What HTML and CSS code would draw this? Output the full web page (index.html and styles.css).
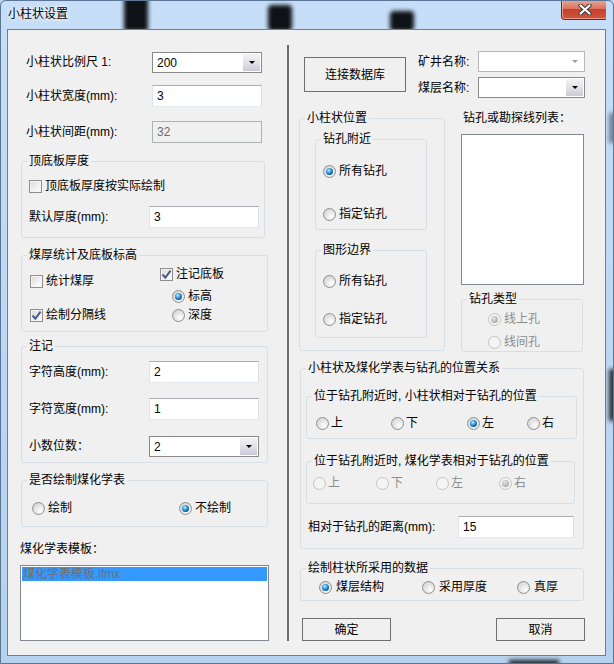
FILE: index.html
```html
<!DOCTYPE html>
<html lang="zh-CN">
<head>
    <meta charset="UTF-8">
    <title>小柱状设置</title>
    <link rel="stylesheet" href="styles.css">
</head>
<body>
<div class="window">
    <span class="glass g-edge1"></span>
    <span class="glass g-edge2"></span>
    <span class="glass g-bottom"></span>

    <div class="titlebar">
        <span class="glass g1"></span>
        <span class="glass g2"></span>
        <span class="glass g3"></span>
        <span class="title">小柱状设置</span>
        <div class="close-btn">
            <svg width="14" height="11" viewBox="0 0 14 11">
                <path d="M2.5 1.5 L11.5 9.5 M11.5 1.5 L2.5 9.5" stroke="#3b3b3b" stroke-width="4.2" stroke-linecap="round"/>
                <path d="M2.5 1.5 L11.5 9.5 M11.5 1.5 L2.5 9.5" stroke="#ffffff" stroke-width="2.2" stroke-linecap="round"/>
            </svg>
        </div>
    </div>

    <div class="client">
        <!-- left column -->
        <div class="left-col">
            <div class="top-row row-scale">
                <span class="lbl-126">小柱状比例尺 1:</span>
                <div class="combo w110"><span class="combo-text">200</span><span class="drop"><i class="arrow"></i></span></div>
            </div>
            <div class="top-row row-width">
                <span class="lbl-126">小柱状宽度(mm):</span>
                <div class="edit w110">3</div>
            </div>
            <div class="top-row row-gap">
                <span class="lbl-126">小柱状间距(mm):</span>
                <div class="edit w110 disabled">32</div>
            </div>

            <fieldset class="group fs-thick">
                <legend>顶底板厚度</legend>
                <div class="opt ml2"><span class="check"></span>顶底板厚度按实际绘制</div>
                <div class="field-row ml2 mt12">
                    <span class="lbl-120">默认厚度(mm):</span>
                    <div class="edit w110">3</div>
                </div>
            </fieldset>

            <fieldset class="group fs-stat">
                <legend>煤厚统计及底板标高</legend>
                <div class="stat-body">
                    <div class="stat-left">
                        <div class="opt st-l1"><span class="check"></span>统计煤厚</div>
                        <div class="opt st-l2"><span class="check on"><svg width="11" height="11" viewBox="0 0 11 11"><path d="M1.5 5.5 L4.3 8.6 L9.6 1.6" fill="none" stroke="#4a5c8e" stroke-width="2"/></svg></span>绘制分隔线</div>
                    </div>
                    <div class="stat-right">
                        <div class="opt st-r1"><span class="check on"><svg width="11" height="11" viewBox="0 0 11 11"><path d="M1.5 5.5 L4.3 8.6 L9.6 1.6" fill="none" stroke="#4a5c8e" stroke-width="2"/></svg></span>注记底板</div>
                        <div class="opt st-r2"><span class="radio on"></span>标高</div>
                        <div class="opt st-r3"><span class="radio"></span>深度</div>
                    </div>
                </div>
            </fieldset>

            <fieldset class="group fs-note">
                <legend>注记</legend>
                <div class="field-row ml2">
                    <span class="lbl-120">字符高度(mm):</span>
                    <div class="edit w110">2</div>
                </div>
                <div class="field-row ml2 mt15">
                    <span class="lbl-120">字符宽度(mm):</span>
                    <div class="edit w110">1</div>
                </div>
                <div class="field-row ml2 mt15">
                    <span class="lbl-120">小数位数：</span>
                    <div class="combo w110"><span class="combo-text">2</span><span class="drop"><i class="arrow"></i></span></div>
                </div>
            </fieldset>

            <fieldset class="group fs-chem">
                <legend>是否绘制煤化学表</legend>
                <div class="radio-row chem-row">
                    <div class="opt"><span class="radio"></span>绘制</div>
                    <div class="opt"><span class="radio on"></span>不绘制</div>
                </div>
            </fieldset>

            <div class="plain-lbl tpl-lbl">煤化学表模板：</div>
            <div class="listbox tpl-list">
                <div class="list-item selected">煤化学表模板.lfmx</div>
            </div>
        </div>

        <div class="divider"></div>

        <!-- right column -->
        <div class="right-col">
            <div class="db-section">
                <div class="btn btn-db">连接数据库</div>
                <div class="db-fields">
                    <div class="field-row h21">
                        <span class="lbl-60">矿井名称:</span>
                        <div class="combo w107 disabled"><span class="combo-text"></span><span class="drop"><i class="arrow"></i></span></div>
                    </div>
                    <div class="field-row h21 mt5">
                        <span class="lbl-60">煤层名称:</span>
                        <div class="combo w107"><span class="combo-text"></span><span class="drop"><i class="arrow"></i></span></div>
                    </div>
                </div>
            </div>

            <div class="mid-section">
                <fieldset class="group fs-pos">
                    <legend>小柱状位置</legend>
                    <fieldset class="group fs-near">
                        <legend>钻孔附近</legend>
                        <div class="opt near-1"><span class="radio on"></span>所有钻孔</div>
                        <div class="opt near-2"><span class="radio"></span>指定钻孔</div>
                    </fieldset>
                    <fieldset class="group fs-bound">
                        <legend>图形边界</legend>
                        <div class="opt bound-1"><span class="radio"></span>所有钻孔</div>
                        <div class="opt bound-2"><span class="radio"></span>指定钻孔</div>
                    </fieldset>
                </fieldset>

                <div class="hole-col">
                    <div class="plain-lbl hole-lbl">钻孔或勘探线列表：</div>
                    <div class="listbox hole-list"></div>
                    <fieldset class="group fs-type">
                        <legend>钻孔类型</legend>
                        <div class="opt dim type-1"><span class="radio on disabled"></span>线上孔</div>
                        <div class="opt dim type-2"><span class="radio disabled"></span>线间孔</div>
                    </fieldset>
                </div>
            </div>

            <fieldset class="group fs-rel">
                <legend>小柱状及煤化学表与钻孔的位置关系</legend>
                <fieldset class="group fs-rel-a">
                    <legend>位于钻孔附近时, 小柱状相对于钻孔的位置</legend>
                    <div class="radio-row rel-a-row">
                        <div class="opt"><span class="radio"></span>上</div>
                        <div class="opt"><span class="radio"></span>下</div>
                        <div class="opt"><span class="radio on"></span>左</div>
                        <div class="opt"><span class="radio"></span>右</div>
                    </div>
                </fieldset>
                <fieldset class="group fs-rel-b">
                    <legend>位于钻孔附近时, 煤化学表相对于钻孔的位置</legend>
                    <div class="radio-row rel-b-row dim">
                        <div class="opt"><span class="radio disabled"></span>上</div>
                        <div class="opt"><span class="radio disabled"></span>下</div>
                        <div class="opt"><span class="radio disabled"></span>左</div>
                        <div class="opt"><span class="radio on disabled"></span>右</div>
                    </div>
                </fieldset>
                <div class="field-row dist-row">
                    <span class="lbl-150">相对于钻孔的距离(mm):</span>
                    <div class="edit w116">15</div>
                </div>
            </fieldset>

            <fieldset class="group fs-data">
                <legend>绘制柱状所采用的数据</legend>
                <div class="radio-row data-row">
                    <div class="opt"><span class="radio on"></span>煤层结构</div>
                    <div class="opt"><span class="radio"></span>采用厚度</div>
                    <div class="opt"><span class="radio"></span>真厚</div>
                </div>
            </fieldset>

            <div class="btn-row">
                <div class="btn btn-ok">确定</div>
                <div class="btn btn-cancel">取消</div>
            </div>
        </div>
    </div>
</div>
</body>
</html>
```

FILE: styles.css
```css
* {
    box-sizing: border-box;
}

body {
    margin: 0;
    font-family: "Liberation Sans", "Noto Sans CJK SC", sans-serif;
    font-size: 12px;
    line-height: 14px;
    color: #000;
    background: #b9d3ee;
}

.window {
    position: relative;
    width: 614px;
    height: 664px;
    padding: 0 7px 7px 6px;
    background: linear-gradient(#c6def7, #bcd6f1 60%, #b6d1ee);
    border: 1px solid #5d7594;
    border-radius: 6px 6px 0 0;
    overflow: hidden;
}

/* desktop showing through the glass frame */
.glass {
    position: absolute;
    background: #0e1216;
    filter: blur(2px);
}

.g1 { left: 117px; top: -4px; width: 24px; height: 34px; }
.g2 { left: 261px; top: 4px; width: 24px; height: 26px; border-radius: 4px; }
.g3 { left: 383px; top: 10px; width: 24px; height: 20px; border-radius: 4px; }
.g-edge1 { right: -3px; top: 112px; width: 7px; height: 30px; background: #6f8092; }
.g-edge2 { right: -3px; top: 368px; width: 7px; height: 52px; background: #2a3038; }
.g-bottom { left: 508px; bottom: -3px; width: 50px; height: 6px; background: #20262c; }

.titlebar {
    position: relative;
    height: 28px;
    display: flex;
    align-items: center;
    overflow: hidden;
}

.title {
    position: relative;
    margin-top: -2px;
    padding-left: 1px;
    text-shadow: 0 0 6px #fff, 0 0 3px #fff;
}

.close-btn {
    position: relative;
    margin-left: auto;
    margin-right: -2px;
    align-self: flex-start;
    margin-top: -1px;
    width: 47px;
    height: 20px;
    display: flex;
    align-items: center;
    justify-content: center;
    background: linear-gradient(#e9a89b, #dc735f 45%, #c7412b 50%, #d0563f);
    border: 1px solid #6f2a1f;
    border-top: none;
    border-radius: 0 0 4px 4px;
    box-shadow: inset 0 0 0 1px rgba(255, 220, 210, 0.5);
}

.client {
    position: relative;
    z-index: 1;
    height: 627px;
    display: flex;
    align-items: flex-start;
    background: #f0f0f0;
    border: 1px solid #6f7e8e;
}

/* ---------- generic controls ---------- */

.edit {
    height: 22px;
    padding: 3px 4px 0;
    background: #fff;
    border: 1px solid;
    border-color: #abadb3 #dbdfe6 #e3e9ef #e2e3ea;
}

.edit.disabled {
    background: #f0f0f0;
    border-color: #adb2b5;
    color: #6d6d6d;
}

.combo {
    height: 21px;
    display: flex;
    background: #fff;
    border: 1px solid #8a8a8a;
}

.combo-text {
    flex: 1;
    padding: 3px 0 0 4px;
}

.drop {
    width: 17px;
    margin: 1px;
    display: flex;
    align-items: center;
    justify-content: center;
    background: linear-gradient(#f3f3f3, #e2e2e6 50%, #c9cad6);
}

.arrow {
    width: 0;
    height: 0;
    border-left: 3px solid transparent;
    border-right: 3px solid transparent;
    border-top: 3px solid #000;
}

.combo.disabled {
    border-color: #b8b8b8;
}

.combo.disabled .drop {
    background: transparent;
}

.combo.disabled .arrow {
    border-top-color: #9a9a9a;
}

.listbox {
    background: #fff;
    border: 1px solid #828790;
}

.list-item {
    height: 14px;
    margin: 1px;
    padding-left: 1px;
    line-height: 14px;
}

.list-item.selected {
    background: #3399ff;
    color: #6f6f6f;
}

.btn {
    display: flex;
    align-items: center;
    justify-content: center;
    background: #f0f0f0;
    border: 1px solid #707070;
}

.check {
    width: 13px;
    height: 13px;
    flex: none;
    display: flex;
    align-items: center;
    justify-content: center;
    background: linear-gradient(135deg, #d8d8d8, #f6f6f6 70%, #fff);
    border: 1px solid #8f8f8f;
    box-shadow: inset 0 0 0 1px #f4f4f4;
}

.radio {
    position: relative;
    width: 13px;
    height: 13px;
    flex: none;
    border-radius: 50%;
    border: 1px solid #8e8f8f;
    background: radial-gradient(circle at 65% 70%, #ffffff, #e6e6e6 45%, #cfcfcf);
}

.radio.on::after {
    content: "";
    position: absolute;
    left: 2px;
    top: 2px;
    width: 7px;
    height: 7px;
    border-radius: 50%;
    background: radial-gradient(circle at 40% 35%, #c4f0ff 0, #39a5e6 35%, #0c5a98 70%, #0c2f52);
}

.radio.disabled {
    border-color: #c4c4c4;
    background: #f4f4f4;
}

.radio.disabled.on::after {
    background: radial-gradient(circle at 40% 35%, #e6e6e6, #b5b5b5 60%, #9a9a9a);
}

.opt {
    display: flex;
    align-items: center;
    gap: 3px;
    height: 16px;
}

.dim {
    color: #8d8d8d;
}

fieldset.group {
    margin: 0;
    padding: 0 5px;
    min-width: 0;
    border: 1px solid #d5dfe5;
    border-radius: 3px;
}

fieldset.group > legend {
    padding: 0 2px;
    line-height: 14px;
}

.field-row {
    display: flex;
    align-items: center;
    height: 22px;
}

.h21 { height: 21px; }

.ml2 { margin-left: 2px; }
.mt5 { margin-top: 5px; }
.mt12 { margin-top: 12px; }
.mt15 { margin-top: 15px; }

.w107 { width: 107px; }
.w110 { width: 110px; }
.w116 { width: 116px; }

.lbl-60 { width: 60px; }
.lbl-120 { width: 120px; }
.lbl-126 { width: 126px; }
.lbl-150 { width: 150px; }

.radio-row {
    display: grid;
    align-items: center;
    height: 16px;
}

.radio-row .opt {
    gap: 2px;
}

/* ---------- left column ---------- */

.left-col {
    width: 249px;
    margin-left: 12px;
    display: flex;
    flex-direction: column;
}

.top-row {
    display: flex;
    align-items: center;
    height: 22px;
    padding-left: 6px;
}

.row-scale { margin-top: 21px; }
.row-width { margin-top: 12px; }
.row-gap { margin-top: 14px; }

.fs-thick {
    width: 244px;
    margin: 11px 0 0 1px !important;
    padding-top: 10px !important;
    padding-bottom: 9px !important;
}

.fs-stat {
    width: 247px;
    margin: 10px 0 0 1px !important;
    padding-bottom: 8px !important;
}

.stat-body {
    display: flex;
}

.stat-left {
    width: 133px;
    padding-left: 3px;
}

.st-l1 { margin-top: 11px; }
.st-l2 { margin-top: 18px; }
.st-r1 { margin-top: 4px; }
.st-r2 { margin-top: 6px; margin-left: 12px; }
.st-r3 { margin-top: 3px; margin-left: 12px; }

.fs-note {
    width: 247px;
    margin: 7px 0 0 1px !important;
    padding-top: 8px !important;
    padding-bottom: 5px !important;
}

.fs-chem {
    width: 247px;
    margin: 10px 0 0 1px !important;
    padding-top: 13px !important;
    padding-bottom: 10px !important;
}

.chem-row {
    grid-template-columns: 147px auto;
    padding-left: 5px;
}

.chem-row .opt {
    gap: 3px;
}

.plain-lbl {
    height: 14px;
}

.tpl-lbl { margin-top: 15px; }

.tpl-list {
    margin-top: 9px;
    height: 76px;
}

.divider {
    width: 2px;
    height: 596px;
    margin: 15px 0 0 18px;
    background: #6d6d6d;
}

/* ---------- right column ---------- */

.right-col {
    width: 287px;
    margin-left: 10px;
    display: flex;
    flex-direction: column;
}

.db-section {
    display: flex;
    align-items: flex-start;
}

.btn-db {
    width: 102px;
    height: 35px;
    margin: 27px 0 0 5px;
}

.db-fields {
    margin: 21px 0 0 12px;
}

.mid-section {
    display: flex;
    align-items: flex-start;
    margin-top: 13px;
}

.fs-pos {
    width: 146px;
    padding-top: 7px !important;
    padding-bottom: 12px !important;
}

.fs-near {
    width: 112px;
    margin-left: 10px !important;
    padding-top: 17px !important;
    padding-bottom: 7px !important;
}

.near-1 { margin-left: 2px; }
.near-2 { margin: 27px 0 0 2px; }

.fs-bound {
    width: 112px;
    margin: 13px 0 0 10px !important;
    padding-top: 16px !important;
    padding-bottom: 10px !important;
}

.bound-1 { margin-left: 2px; }
.bound-2 { margin: 22px 0 0 2px; }

.hole-col {
    width: 123px;
    margin-left: 16px;
}

.hole-lbl { padding-left: 2px; }

.hole-list {
    margin-top: 9px;
    height: 151px;
}

.fs-type {
    width: 122px;
    margin-top: 7px !important;
    padding-top: 5px !important;
    padding-bottom: 1px !important;
}

.type-1 { margin-left: 21px; }
.type-2 { margin: 7px 0 0 21px; }

.fs-rel {
    width: 284px;
    margin: 9px 0 0 1px !important;
    padding-top: 14px !important;
    padding-bottom: 10px !important;
}

.fs-rel-a {
    width: 271px;
    padding-top: 12px !important;
    padding-bottom: 7px !important;
}

.rel-a-row {
    grid-template-columns: 75px 76px 60px auto;
    padding-left: 4px;
}

.fs-rel-b {
    width: 269px;
    margin-top: 15px !important;
    padding-top: 7px !important;
    padding-bottom: 12px !important;
}

.rel-b-row {
    grid-template-columns: 63px 60px 63px auto;
    padding-left: 1px;
}

.dist-row {
    margin: 12px 0 0 2px;
}

.fs-data {
    width: 284px;
    margin: 12px 0 0 1px !important;
    padding-top: 4px !important;
    padding-bottom: 5px !important;
}

.data-row {
    grid-template-columns: 103px 95px auto;
    padding-left: 13px;
}

.data-row .opt {
    gap: 4px;
}

.btn-row {
    display: flex;
    justify-content: space-between;
    margin-top: 17px;
    padding: 0 1px 0 3px;
}

.btn-ok,
.btn-cancel {
    width: 89px;
    height: 23px;
}
```
